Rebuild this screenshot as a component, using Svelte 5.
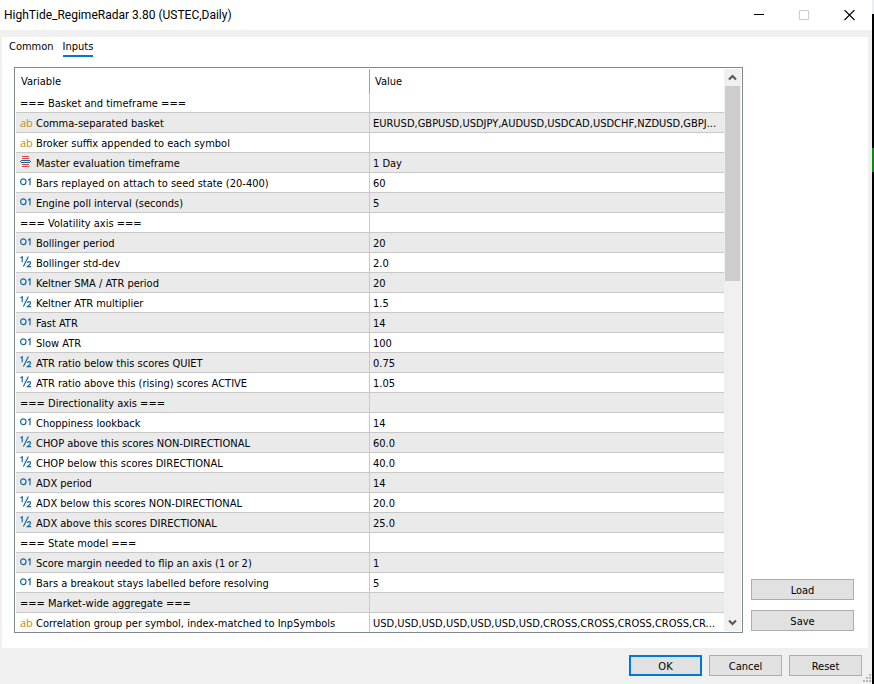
<script lang="ts">
	type Kind = 'group' | 'string' | 'enum' | 'int' | 'double';
	type Param = { kind: Kind; name: string; value?: string };

	const params: Param[] = [
		{ kind: 'group', name: '=== Basket and timeframe ===' },
		{
			kind: 'string',
			name: 'Comma-separated basket',
			value: 'EURUSD,GBPUSD,USDJPY,AUDUSD,USDCAD,USDCHF,NZDUSD,GBPJ...'
		},
		{ kind: 'string', name: 'Broker suffix appended to each symbol' },
		{ kind: 'enum', name: 'Master evaluation timeframe', value: '1 Day' },
		{ kind: 'int', name: 'Bars replayed on attach to seed state (20-400)', value: '60' },
		{ kind: 'int', name: 'Engine poll interval (seconds)', value: '5' },
		{ kind: 'group', name: '=== Volatility axis ===' },
		{ kind: 'int', name: 'Bollinger period', value: '20' },
		{ kind: 'double', name: 'Bollinger std-dev', value: '2.0' },
		{ kind: 'int', name: 'Keltner SMA / ATR period', value: '20' },
		{ kind: 'double', name: 'Keltner ATR multiplier', value: '1.5' },
		{ kind: 'int', name: 'Fast ATR', value: '14' },
		{ kind: 'int', name: 'Slow ATR', value: '100' },
		{ kind: 'double', name: 'ATR ratio below this scores QUIET', value: '0.75' },
		{ kind: 'double', name: 'ATR ratio above this (rising) scores ACTIVE', value: '1.05' },
		{ kind: 'group', name: '=== Directionality axis ===' },
		{ kind: 'int', name: 'Choppiness lookback', value: '14' },
		{ kind: 'double', name: 'CHOP above this scores NON-DIRECTIONAL', value: '60.0' },
		{ kind: 'double', name: 'CHOP below this scores DIRECTIONAL', value: '40.0' },
		{ kind: 'int', name: 'ADX period', value: '14' },
		{ kind: 'double', name: 'ADX below this scores NON-DIRECTIONAL', value: '20.0' },
		{ kind: 'double', name: 'ADX above this scores DIRECTIONAL', value: '25.0' },
		{ kind: 'group', name: '=== State model ===' },
		{ kind: 'int', name: 'Score margin needed to flip an axis (1 or 2)', value: '1' },
		{ kind: 'int', name: 'Bars a breakout stays labelled before resolving', value: '5' },
		{ kind: 'group', name: '=== Market-wide aggregate ===' },
		{
			kind: 'string',
			name: 'Correlation group per symbol, index-matched to InpSymbols',
			value: 'USD,USD,USD,USD,USD,USD,USD,CROSS,CROSS,CROSS,CROSS,CR...'
		}
	];

	let tab = $state('Inputs');
</script>

<div class="desktop">
	<div class="dialog" role="dialog" aria-labelledby="title">
		<header>
			<h1 id="title">HighTide_RegimeRadar 3.80 (USTEC,Daily)</h1>
			<div class="caption">
				<button aria-label="Minimize">
					<svg width="11" height="11" viewBox="0 0 11 11"><path d="M0 4.5h10" stroke="#000" /></svg>
				</button>
				<button aria-label="Maximize" disabled>
					<svg width="11" height="11" viewBox="0 0 11 11">
						<path d="M.5 .5h9v9h-9z" fill="none" stroke="#ccc" />
					</svg>
				</button>
				<button aria-label="Close">
					<svg width="11" height="11" viewBox="0 0 11 11">
						<path d="M.5 0l10 10M10.5 0l-10 10" stroke="#000" stroke-width="1.1" />
					</svg>
				</button>
			</div>
		</header>

		<main>
			<div class="tabs" role="tablist">
				{#each ['Common', 'Inputs'] as name}
					<button role="tab" aria-selected={tab === name} onclick={() => (tab = name)}>{name}</button>
				{/each}
			</div>

			<div class="content">
				<div class="list">
					<table>
						<thead>
							<tr><th class="name">Variable</th><th>Value</th></tr>
						</thead>
						<tbody>
							{#each params as p}
								<tr>
									<td class="name">
										<div class="cell">
											{#if p.kind === 'string'}
												<span class="icon string">ab</span>
											{:else if p.kind === 'int'}
												<svg class="icon" viewBox="0 0 12 12" fill="none" stroke="#17689f" stroke-width="1.2">
													<ellipse cx="3.3" cy="5.8" rx="2.7" ry="2.9" />
													<path d="M8 4.2l2-1.3v6.4" />
												</svg>
											{:else if p.kind === 'double'}
												<svg class="icon" viewBox="0 0 12 12" fill="none" stroke="#17689f" stroke-width="1.2">
													<path d="M.5 2l1.7-1.2v5.4M8.4 .5l-5 10" />
													<path d="M7.3 6.9c.3-1.6 3.3-1.6 3.3.1 0 1.3-1.8 2.2-3.2 3.6h3.8" />
												</svg>
											{:else if p.kind === 'enum'}
												<svg class="icon" viewBox="0 0 12 12" fill="none">
													<path d="M2 .5h7M2 2.5h7M2 8.5h7M2 10.5h7" stroke="#d84848" />
													<path d="M1 4.5h9M1 6.5h9M0 5.5h1M10 5.5h1" stroke="#17689f" />
												</svg>
											{/if}
											<span>{p.name}</span>
										</div>
									</td>
									<td>{p.value ?? ''}</td>
								</tr>
							{/each}
						</tbody>
					</table>
					<div class="scrollbar">
						<button aria-label="Scroll up">
							<svg width="9" height="7" viewBox="0 0 9 7" fill="none" stroke="#555" stroke-width="2">
								<path d="M1 5.5l3.5-3.5 3.5 3.5" />
							</svg>
						</button>
						<div class="track"><div class="thumb"></div></div>
						<button aria-label="Scroll down">
							<svg width="9" height="7" viewBox="0 0 9 7" fill="none" stroke="#555" stroke-width="2">
								<path d="M1 1.5l3.5 3.5 3.5-3.5" />
							</svg>
						</button>
					</div>
				</div>
				<div class="side">
					<button class="btn">Load</button>
					<button class="btn">Save</button>
				</div>
			</div>
		</main>

		<footer>
			<button class="btn default">OK</button>
			<button class="btn">Cancel</button>
			<button class="btn">Reset</button>
			<svg class="grip" width="8" height="8" viewBox="0 0 8 8" fill="#b8b8b8">
				<path d="M6 0h2v2h-2zM3 3h2v2h-2zM6 3h2v2h-2zM0 6h2v2h-2zM3 6h2v2h-2zM6 6h2v2h-2z" />
			</svg>
		</footer>
	</div>
	<div class="chart"></div>
</div>

<style>
	:global(body) {
		background: #f0f0f0;
	}

	.desktop {
		display: flex;
		min-height: 100vh;
		font: 11px/16px Tahoma, 'DejaVu Sans Condensed', sans-serif;
		color: #000;
	}

	button {
		font: inherit;
		color: inherit;
		border: 0;
		padding: 0;
		background: none;
	}

	.dialog {
		flex: 1;
		min-width: 0;
		display: flex;
		flex-direction: column;
		background: #f0f0f0;
	}

	/* sliver of the chart window behind the dialog */
	.chart {
		width: 2px;
		background: linear-gradient(#e8eef2 14px, #000 14px 148px, #0a8a0a 148px 172px, #000 172px);
	}

	header {
		display: flex;
		align-items: center;
		justify-content: space-between;
		height: 30px;
		padding-left: 4px;
		background: #fff;
	}
	h1 {
		margin: 0;
		font: 12px/16px 'Segoe UI', Roboto, sans-serif;
	}
	.caption {
		display: flex;
		height: 28px;
	}
	.caption button {
		display: grid;
		place-items: center;
		width: 45px;
	}

	main {
		flex: 1;
		margin: 7px 4px 0 2px;
		padding: 0 14px 15px 12px;
		background: #fff;
	}

	.tabs {
		display: flex;
		gap: 9px;
		height: 30px;
		margin-left: -5px;
		align-items: flex-start;
	}
	.tabs button {
		height: 20px;
		padding-top: 2px;
		border-bottom: 2px solid transparent;
	}
	.tabs button[aria-selected='true'] {
		border-color: #0078d7;
	}

	.content {
		display: flex;
		gap: 8px;
	}
	.list {
		flex: 1;
		min-width: 0;
		display: flex;
		border: 1px solid #828790;
		padding: 1px 1px 0;
	}

	table {
		flex: 1;
		min-width: 0;
		table-layout: fixed;
		border-collapse: separate;
		border-spacing: 0;
		width: 100%;
	}
	.name {
		box-sizing: border-box;
		width: 353px;
	}
	th {
		height: 22px;
		padding: 2px 5px 0;
		font-weight: normal;
		text-align: left;
		vertical-align: middle;
	}
	th.name {
		height: 24px;
	}
	th + th {
		border-left: 1px solid #a0a0a0;
	}
	td {
		height: 16px;
		padding: 3px 3px 0;
		white-space: nowrap;
		overflow: hidden;
		vertical-align: top;
		border-bottom: 1px solid #c8c8c8;
	}
	td.name {
		height: 20px;
	}
	td + td {
		border-left: 1px solid #c8c8c8;
	}
	tr:last-child td {
		border-bottom: 0;
	}
	tr:last-child td.name {
		height: 19px;
	}
	tbody tr:nth-child(even) {
		background: #eaeaea;
	}
	.cell {
		display: flex;
		align-items: flex-start;
		gap: 4px;
		padding-left: 1px;
	}
	.icon {
		flex: none;
		width: 12px;
		height: 12px;
	}
	.string {
		font-family: 'Open Sans', sans-serif;
		line-height: 13px;
		color: #c08a1e;
	}

	.scrollbar {
		display: flex;
		flex-direction: column;
		flex: none;
		width: 17px;
		margin-bottom: 1px;
		background: #f0f0f0;
	}
	.scrollbar button {
		display: grid;
		place-items: center;
		height: 17px;
	}
	.track {
		flex: 1;
	}
	.thumb {
		height: 37%;
		margin: 0 1px;
		background: #cdcdcd;
	}

	.side {
		display: flex;
		flex-direction: column;
		justify-content: flex-end;
		gap: 10px;
		width: 103px;
		padding-bottom: 2px;
	}
	.btn {
		box-sizing: border-box;
		height: 21px;
		padding-top: 2px;
		border: 1px solid #adadad;
		background: #e1e1e1;
	}

	footer {
		position: relative;
		display: flex;
		justify-content: flex-end;
		gap: 7px;
		padding: 7px 10px 8px;
	}
	footer .btn {
		width: 73px;
	}
	footer .default {
		border: 2px solid #0078d7;
	}
	.grip {
		position: absolute;
		right: 1px;
		bottom: 2px;
	}
</style>
